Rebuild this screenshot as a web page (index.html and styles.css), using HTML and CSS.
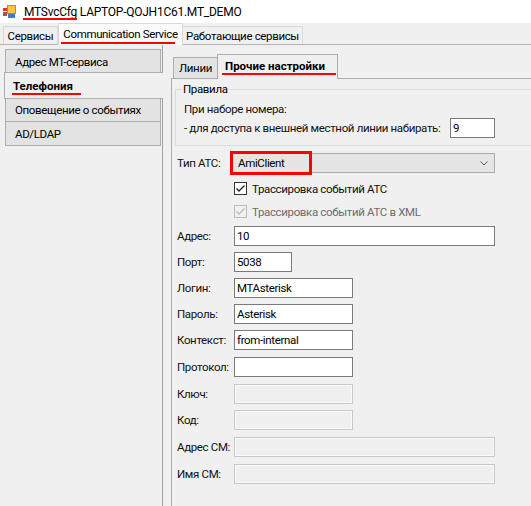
FILE: index.html
```html
<!DOCTYPE html>
<html lang="ru">
<head>
<meta charset="utf-8">
<title>MTSvcCfg</title>
<link rel="stylesheet" href="styles.css">
</head>
<body>
<div class="window">
  <div class="titlebar">
    <svg class="appicon" viewBox="0 0 13 13" width="13" height="13">
      <rect x="4.5" y="0.5" width="8" height="8" fill="#f6c343" stroke="#c98a1c"/>
      <rect x="0" y="3" width="4" height="3" fill="#e0302c"/>
      <rect x="0" y="7" width="4" height="4" fill="#b84a4a"/>
      <rect x="5" y="9" width="7" height="4" fill="#3b7ad6"/>
    </svg>
    <span class="title"><span class="mark mark-title">MTSvcCfg</span> LAPTOP-QOJH1C61.MT_DEMO</span>
  </div>

  <div class="tabstrip">
    <div class="tab tab-services">Сервисы</div>
    <div class="tab tab-comm active"><span class="mark mark-tab">Communication Service</span></div>
    <div class="tab tab-running">Работающие сервисы</div>
  </div>

  <div class="main">
    <div class="sidetabs">
      <div class="stab">Адрес МТ-сервиса</div>
      <div class="stab active"><span class="mark mark-side">Телефония</span></div>
      <div class="stab">Оповещение о событиях</div>
      <div class="stab">AD/LDAP</div>
    </div>

    <div class="page">
      <div class="innertabs">
        <div class="itab itab-lines">Линии</div>
        <div class="itab itab-other active"><span class="mark mark-inner">Прочие настройки</span></div>
      </div>

      <div class="ipage">
        <fieldset class="group">
          <legend>Правила</legend>
          <div class="group-line">При наборе номера:</div>
          <div class="group-row">
            <span>- для доступа к внешней местной линии набирать:</span>
            <input class="field field-digit" type="text" value="9" readonly>
          </div>
        </fieldset>

        <div class="form">
          <div class="row">
            <span class="lbl">Тип АТС:</span>
            <div class="combo">
              <span>AmiClient</span>
              <svg class="chev" viewBox="0 0 8 5" width="8" height="5"><path d="M0.5 0.5 L4 4 L7.5 0.5" fill="none" stroke="#5a5a5a" stroke-width="1"/></svg>
              <span class="combo-mark"></span>
            </div>
          </div>
          <div class="row row-cb row-cb1">
            <span class="cb">
              <svg viewBox="0 0 13 13" width="13" height="13"><path d="M2.5 6.5 L5 9 L10.5 3.5" fill="none" stroke="#222" stroke-width="1.3"/></svg>
            </span>
            <span>Трассировка событий АТС</span>
          </div>
          <div class="row row-cb row-cb2 disabled">
            <span class="cb cb-disabled">
              <svg viewBox="0 0 13 13" width="13" height="13"><path d="M2.5 6.5 L5 9 L10.5 3.5" fill="none" stroke="#bcbcbc" stroke-width="1.3"/></svg>
            </span>
            <span>Трассировка событий АТС в XML</span>
          </div>
          <div class="row row-field">
            <span class="lbl">Адрес:</span>
            <input class="field field-wide" type="text" value="10" readonly>
          </div>
          <div class="row row-field">
            <span class="lbl">Порт:</span>
            <input class="field field-short" type="text" value="5038" readonly>
          </div>
          <div class="row row-field">
            <span class="lbl">Логин:</span>
            <input class="field field-mid" type="text" value="MTAsterisk" readonly>
          </div>
          <div class="row row-field">
            <span class="lbl">Пароль:</span>
            <input class="field field-mid" type="text" value="Asterisk" readonly>
          </div>
          <div class="row row-field">
            <span class="lbl">Контекст:</span>
            <input class="field field-mid" type="text" value="from-internal" readonly>
          </div>
          <div class="row row-field gap7">
            <span class="lbl">Протокол:</span>
            <input class="field field-mid" type="text" value="" readonly>
          </div>
          <div class="row row-field gap7">
            <span class="lbl">Ключ:</span>
            <input class="field field-mid" type="text" value="" disabled>
          </div>
          <div class="row row-field">
            <span class="lbl">Код:</span>
            <input class="field field-mid" type="text" value="" disabled>
          </div>
          <div class="row row-field gap7">
            <span class="lbl">Адрес СМ:</span>
            <input class="field field-wide" type="text" value="" disabled>
          </div>
          <div class="row row-field gap7">
            <span class="lbl">Имя СМ:</span>
            <input class="field field-wide" type="text" value="" disabled>
          </div>
        </div>
      </div>
    </div>
  </div>
</div>
</body>
</html>
```

FILE: styles.css
```css
* { box-sizing: border-box; }
html, body { margin: 0; padding: 0; }
body {
  width: 531px;
  height: 506px;
  overflow: hidden;
  background: #f0f0f0;
  font-family: Roboto, "Noto Sans", sans-serif;
  font-size: 11.5px;
  letter-spacing: -0.35px;
  color: #111;
  white-space: nowrap;
}

/* red annotation underlines */
.mark { position: relative; }
.mark::after {
  content: "";
  position: absolute;
  height: 2px;
  background: #ff0000;
}
.mark-title::after { bottom: -1px; left: -1px; width: 54px; }
.mark-tab::after { bottom: -3px; left: -2px; width: 114px; }
.mark-side::after { bottom: -2px; left: -1px; width: 69px; }
.mark-inner::after { bottom: -2px; left: -3px; width: 114px; }

/* title bar */
.titlebar {
  height: 23px;
  background: #ffffff;
  display: flex;
  align-items: center;
  padding-left: 3px;
}
.appicon { margin-right: 8px; margin-top: -1px; }
.title { font-size: 12px; letter-spacing: -0.25px; color: #000; }

/* top tabs */
.tabstrip {
  height: 22px;
  display: flex;
  align-items: flex-end;
  padding-left: 3px;
  border-bottom: 1px solid #b4b4b4;
}
.tab {
  height: 18px;
  border: 1px solid #d9d9d9;
  border-bottom: none;
  background: #f0f0f0;
  display: flex;
  align-items: center;
  justify-content: center;
  color: #000;
}
.tab.active {
  height: 22px;
  margin-bottom: -1px;
  background: #fafafa;
  position: relative;
  z-index: 1;
  padding-bottom: 1px;
}
.tab-services { width: 55px; }
.tab-comm { width: 125px; }
.tab-running { width: 120px; border-left: none; }

/* main area */
.main {
  display: flex;
  height: 461px;
  padding-left: 4px;
}
.sidetabs {
  width: 158px;
  flex: none;
  padding-top: 4px;
  display: flex;
  flex-direction: column;
}
.stab {
  height: 25px;
  margin-left: 1px;
  margin-top: -1px;
  margin-right: 1px;
  border: 1px solid #adadad;
  background: #e3e3e3;
  display: flex;
  align-items: center;
  padding-left: 9px;
  color: #000;
}
.stab:first-child { margin-top: 0; }
.stab.active {
  height: 27px;
  margin-left: 0;
  margin-right: -1px;
  margin-top: -2px;
  margin-bottom: -1px;
  border-right: none;
  background: #f0f0f0;
  font-weight: bold;
  letter-spacing: 0;
  padding-left: 8px;
  position: relative;
  z-index: 1;
}

.page {
  flex: 1;
  min-width: 0;
  border-left: 1px solid #a0a0a0;
  padding: 9px 0 0 8px;
  overflow: hidden;
}

.innertabs {
  height: 24px;
  display: flex;
  align-items: flex-end;
  padding-left: 2px;
}
.itab {
  height: 21px;
  border: 1px solid #adadad;
  border-bottom: none;
  background: #e3e3e3;
  display: flex;
  align-items: center;
  justify-content: center;
  color: #000;
}
.itab.active {
  height: 25px;
  margin-bottom: -1px;
  background: #f0f0f0;
  font-weight: bold;
  letter-spacing: 0;
  position: relative;
  z-index: 1;
  padding: 0 0 2px 7px;
  justify-content: flex-start;
}
.itab-lines { width: 44px; border-right: none; }
.itab-other { width: 121px; }

.ipage {
  border-top: 1px solid #adadad;
  border-left: 1px solid #adadad;
  padding: 0 0 0 3px;
  height: 500px;
}

/* group box */
.group {
  width: 420px;
  margin: 2px 0 0 0;
  padding: 0 0 7px 8px;
  border: 1px solid #dcdcdc;
  min-width: 0;
}
.group legend {
  padding: 0 1px;
  margin-left: -2px;
  line-height: 16px;
  color: #000;
}
.group-line {
  margin-top: 4px;
  height: 16px;
  line-height: 16px;
}
.group-row {
  display: grid;
  grid-template-columns: 266px 45px;
  align-items: center;
  margin-top: 1px;
}

/* form */
.form {
  padding-left: 2px;
  margin-top: 7px;
  display: flex;
  flex-direction: column;
}
.row {
  display: flex;
  align-items: center;
  height: 20px;
}
.row-field { margin-top: 6px; }
.row-field.gap7 { margin-top: 7px; }
.lbl { width: 57px; flex: none; }

.combo {
  margin-left: -3px;
  width: 264px;
  height: 20px;
  border: 1px solid #acacac;
  background: #e5e5e5;
  display: flex;
  align-items: center;
  justify-content: space-between;
  padding: 0 6px;
  position: relative;
  color: #000;
}
.combo-mark {
  position: absolute;
  left: -2px;
  top: -3px;
  width: 82px;
  height: 24px;
  border: 3px solid #ff0000;
}

.row-cb { height: 17px; padding-left: 57px; }
.row-cb1 { margin-top: 7px; }
.row-cb2 { margin-top: 6px; }
.row-cb.disabled { color: #6d6d6d; }
.cb {
  width: 13px;
  height: 13px;
  border: 1px solid #333333;
  background: #ffffff;
  margin-right: 5px;
  display: flex;
  align-items: center;
  justify-content: center;
  flex: none;
}
.cb svg { display: block; margin: -1px; }
.cb-disabled { border-color: #bcbcbc; background: #f0f0f0; }

.field {
  height: 20px;
  border: 1px solid #7a7a7a;
  background: #ffffff;
  font: inherit;
  letter-spacing: inherit;
  color: #000;
  padding: 0 2px;
  margin: 0;
  outline: none;
}
.field:disabled {
  border-color: #c8c8c8;
  background: #f0f0f0;
  box-shadow: inset 0 0 0 1px #fafafa;
}
.field-wide { width: 261px; }
.field-mid { width: 119px; }
.field-short { width: 58px; }
.field-digit { width: 45px; }
```
